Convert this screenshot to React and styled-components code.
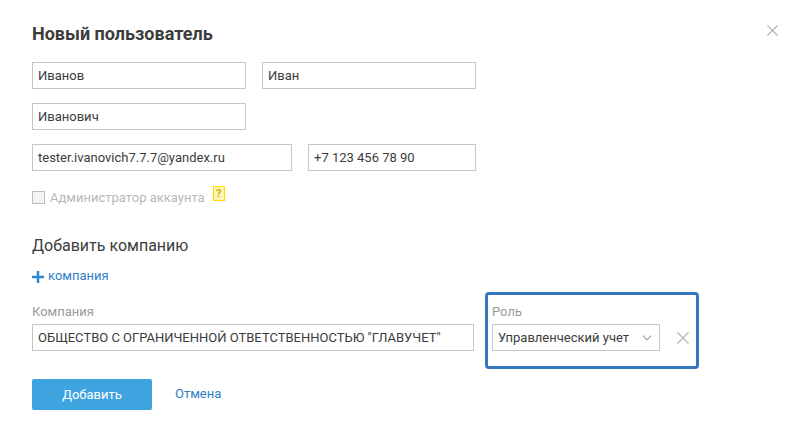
import React from "react";
import styled, { createGlobalStyle } from "styled-components";

const GlobalStyle = createGlobalStyle`
  html, body {
    margin: 0;
    padding: 0;
    background: #fff;
  }
  * {
    box-sizing: border-box;
  }
`;

const Page = styled.div`
  position: relative;
  width: 796px;
  height: 442px;
  padding: 23px 32px 0;
  font-family: Roboto, "Liberation Sans", sans-serif;
  color: #3c3c3c;
  overflow: hidden;
`;

const Close = styled.button`
  position: absolute;
  top: 25px;
  right: 18px;
  width: 11px;
  height: 11px;
  padding: 0;
  border: 0;
  background: none;
  display: block;
`;

const Title = styled.h1`
  margin: 0 0 18px;
  font-size: 18px;
  line-height: 21px;
  font-weight: 700;
  color: #3c3c3c;
`;

const Row = styled.div`
  display: flex;
  gap: 16px;
  margin-bottom: ${p => p.$mb ?? 14}px;
`;

const Field = styled.div`
  width: ${p => p.$w}px;
  height: 27px;
  flex-shrink: 0;
  padding: 0 5px;
  border: 1px solid #c6c6c6;
  background: #fff;
  font-size: 13px;
  line-height: 25px;
  color: #3c3c3c;
  white-space: nowrap;
  overflow: hidden;
`;

const CheckRow = styled.div`
  display: flex;
  align-items: center;
  height: 24px;
  margin-top: 13px;
  margin-bottom: 28px;
`;

const Checkbox = styled.span`
  width: 13px;
  height: 13px;
  margin-top: 3px;
  border: 1px solid #bcbcbc;
  background: #f4f4f4;
`;

const CheckLabel = styled.span`
  margin-left: 5px;
  margin-top: 3px;
  font-size: 13px;
  color: #b8b8b8;
`;

const Hint = styled.span`
  width: 12px;
  height: 15px;
  margin-left: 8px;
  margin-top: -6px;
  border: 1px solid #ffdd00;
  background: #fff5b0;
  color: #d4ae00;
  font-size: 11px;
  font-weight: 700;
  line-height: 13px;
  text-align: center;
`;

const Subtitle = styled.h2`
  margin: 0 0 11px;
  font-size: 16px;
  line-height: 19px;
  font-weight: 400;
  color: #3c3c3c;
`;

const AddLink = styled.a`
  display: flex;
  align-items: center;
  gap: 4px;
  height: 18px;
  font-size: 13px;
  color: #2f80c8;
`;

const CompanyRow = styled.div`
  display: flex;
  align-items: flex-start;
  gap: 11px;
  margin-top: 8px;
`;

const CompanyCol = styled.div`
  width: 442px;
  padding-top: 11px;
`;

const FieldLabel = styled.div`
  font-size: 13px;
  line-height: 18px;
  margin-bottom: 3px;
  color: #9a9a9a;
`;

const RoleBox = styled.div`
  width: 214px;
  height: 77px;
  padding: 8px 4px 0;
  border: 3px solid #3577bd;
  border-radius: 4px;
`;

const RoleLine = styled.div`
  display: flex;
  align-items: center;
  gap: 17px;
`;

const Select = styled.div`
  display: flex;
  align-items: center;
  justify-content: space-between;
  width: 168px;
  height: 27px;
  padding: 0 7px 0 5px;
  border: 1px solid #c6c6c6;
  font-size: 13px;
  color: #3c3c3c;
  white-space: nowrap;
`;

const Actions = styled.div`
  display: flex;
  align-items: center;
  gap: 23px;
  margin-top: 10px;
`;

const Submit = styled.button`
  width: 120px;
  height: 31px;
  padding: 0;
  border: 0;
  border-radius: 2px;
  background: #3ea4e0;
  color: #fff;
  font-family: inherit;
  font-size: 13px;
`;

const CancelLink = styled.a`
  padding-bottom: 2px;
  font-size: 13px;
  color: #2f80c8;
`;

const Cross = ({ size = 12, color = "#b4b9bf" }) => (
  <svg width={size} height={size} viewBox="0 0 12 12" style={{ display: "block" }}>
    <path d="M.5.5l11 11M11.5.5l-11 11" stroke={color} strokeWidth="1.4" fill="none" />
  </svg>
);

const App = () => {
  return (
    <Page>
      <GlobalStyle />
      <Close>
        <Cross size={11} />
      </Close>
      <Title>Новый пользователь</Title>
      <Row>
        <Field $w={214}>Иванов</Field>
        <Field $w={214}>Иван</Field>
      </Row>
      <Row>
        <Field $w={214}>Иванович</Field>
      </Row>
      <Row $mb={0}>
        <Field $w={260}>tester.ivanovich7.7.7@yandex.ru</Field>
        <Field $w={168}>+7 123 456 78 90</Field>
      </Row>
      <CheckRow>
        <Checkbox />
        <CheckLabel>Администратор аккаунта</CheckLabel>
        <Hint>?</Hint>
      </CheckRow>
      <Subtitle>Добавить компанию</Subtitle>
      <AddLink>
        <svg width="12" height="12" viewBox="0 0 12 12" style={{ marginTop: 3 }}>
          <path d="M6 0v12M0 6h12" stroke="#2d86d2" strokeWidth="2.5" fill="none" />
        </svg>
        компания
      </AddLink>
      <CompanyRow>
        <CompanyCol>
          <FieldLabel>Компания</FieldLabel>
          <Field $w={442}>ОБЩЕСТВО С ОГРАНИЧЕННОЙ ОТВЕТСТВЕННОСТЬЮ "ГЛАВУЧЕТ"</Field>
        </CompanyCol>
        <RoleBox>
          <FieldLabel>Роль</FieldLabel>
          <RoleLine>
            <Select>
              Управленческий учет
              <svg width="10" height="6" viewBox="0 0 11 7">
                <path d="M.7.7l4.8 5 4.8-5" stroke="#a0a6ad" strokeWidth="1.5" fill="none" />
              </svg>
            </Select>
            <Cross />
          </RoleLine>
        </RoleBox>
      </CompanyRow>
      <Actions>
        <Submit>Добавить</Submit>
        <CancelLink>Отмена</CancelLink>
      </Actions>
    </Page>
  );
};

export default App;
